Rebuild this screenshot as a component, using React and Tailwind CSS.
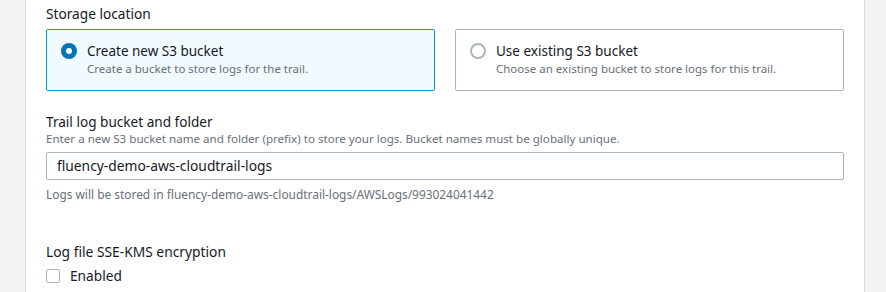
import React from "react";

const RadioCard = ({ selected, title, description }) => (
  <div
    className={`flex-1 h-[62px] rounded-[2px] border px-[15px] pt-[11px] ${
      selected ? "border-[#00a1c9] bg-[#f1faff]" : "border-[#aab7b8] bg-white"
    }`}
  >
    <div className="flex gap-[10px]">
      <div className="pt-[2px] -ml-[1px]">
        {selected ? (
          <div className="w-[16px] h-[16px] rounded-full bg-[#0073bb] flex items-center justify-center">
            <div className="w-[6px] h-[6px] rounded-full bg-white" />
          </div>
        ) : (
          <div className="w-[16px] h-[16px] rounded-full border-2 border-[#aab7b8] bg-white" />
        )}
      </div>
      <div>
        <div className="text-[13.5px] leading-[20px] text-[#16191f]">{title}</div>
        <div className="text-[11.5px] leading-[16px] text-[#687078]">
          {description}
        </div>
      </div>
    </div>
  </div>
);

export default function App() {
  return (
    <div
      className="w-[886px] h-[292px] bg-[#f2f3f3] flex overflow-hidden"
      style={{ fontFamily: '"Noto Sans", "Open Sans", sans-serif' }}
    >
      <div className="ml-[25px] w-[840px] h-full bg-white border-x border-[#d5dbdb] px-[20px]">
        <div className="pt-[3px] text-[13.7px] leading-[22px] text-[#16191f]">
          Storage location
        </div>
        <div className="flex gap-[20px] mt-[4px]">
          <RadioCard
            selected
            title="Create new S3 bucket"
            description="Create a bucket to store logs for the trail."
          />
          <RadioCard
            title="Use existing S3 bucket"
            description="Choose an existing bucket to store logs for this trail."
          />
        </div>

        <div className="mt-[20px] text-[13.6px] leading-[22px] text-[#16191f]">
          Trail log bucket and folder
        </div>
        <div className="-mt-[1px] text-[11.6px] leading-[14px] text-[#687078]">
          Enter a new S3 bucket name and folder (prefix) to store your logs. Bucket names must be globally unique.
        </div>
        <div className="mt-[6px] h-[28px] border border-[#aab7b8] rounded-[2px] px-[10px] flex items-center text-[13.8px] text-[#16191f]">
          fluency-demo-aws-cloudtrail-logs
        </div>
        <div className="mt-[6px] text-[11.9px] leading-[16px] text-[#687078]">
          Logs will be stored in fluency-demo-aws-cloudtrail-logs/AWSLogs/993024041442
        </div>

        <div className="mt-[39px] text-[13.8px] leading-[22px] text-[#16191f]">
          Log file SSE-KMS encryption
        </div>
        <div className="mt-[3px] flex items-center gap-[10px]">
          <div className="w-[14px] h-[14px] border border-[#aab7b8] rounded-[2px] bg-white" />
          <span className="text-[13.7px] leading-[20px] text-[#16191f]">Enabled</span>
        </div>
      </div>
    </div>
  );
}
